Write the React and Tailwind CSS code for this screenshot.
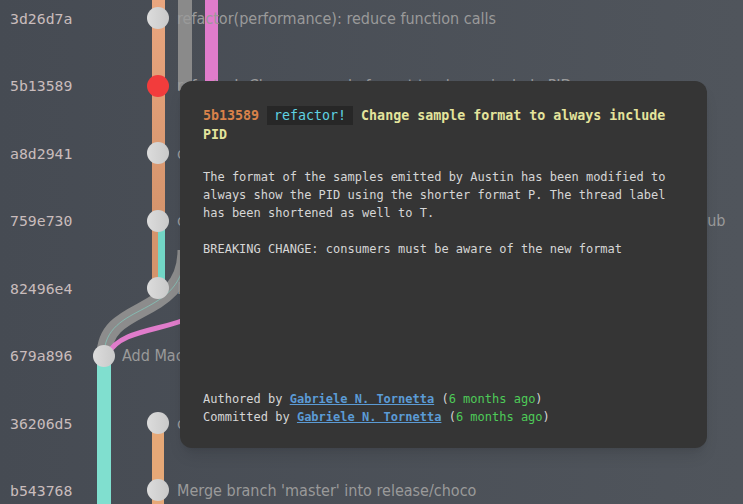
import React from 'react';

// commit rows of the graph log
const commits = [
  { hash: '3d26d7a', msg: 'refactor(performance): reduce function calls', lead: 'w-[177px]' },
  { hash: '5b13589', msg: 'refactor!: Change sample format to always include PID', lead: 'w-[177px]' },
  { hash: 'a8d2941', msg: 'chore: bump version to 3.2.0', lead: 'w-[177px]' },
  { hash: '759e730', msg: 'ci: add a workflow to build, test and publish the releases artifacts on GitHub', lead: 'w-[177px]' },
  { hash: '82496e4', msg: 'Merge branch \'devel\' into master', lead: 'w-[177px]' },
  { hash: '679a896', msg: 'Add MacPorts installation instructions', lead: 'w-[122px]' },
  { hash: '36206d5', msg: 'chore: prepare chocolatey package', lead: 'w-[177px]' },
  { hash: 'b543768', msg: "Merge branch 'master' into release/choco", lead: 'w-[177px]' },
];

const nodes = [
  { x: 158, y: 18 },
  { x: 158, y: 86, red: true },
  { x: 158, y: 153 },
  { x: 158, y: 221 },
  { x: 158, y: 288 },
  { x: 104, y: 356 },
  { x: 158, y: 423 },
  { x: 158, y: 490 },
];

function Graph() {
  return (
    <svg className="absolute left-0 top-0" width="260" height="504" viewBox="0 0 260 504">
      <defs>
        <linearGradient id="orange" x1="0" y1="0" x2="0" y2="1">
          <stop offset="0" stopColor="#e9a67f" />
          <stop offset="1" stopColor="#d5946c" />
        </linearGradient>
        <linearGradient id="node" x1="0" y1="0" x2="1" y2="0">
          <stop offset="0" stopColor="#dcdcdc" />
          <stop offset="1" stopColor="#c9c9c9" />
        </linearGradient>
      </defs>
      {/* side lanes going under the tooltip */}
      <rect x="178" y="0" width="14" height="90" fill="#8a8a8a" />
      <rect x="205" y="0" width="13" height="90" fill="#e07ccb" />
      {/* merge curves into 679a896 */}
      <path d="M185 250 C185 320 104 300 104 356" stroke="#8c8c8c" strokeWidth="15" fill="none" />
      <path d="M185 250 C185 320 104 300 104 356" stroke="#7fdccc" strokeWidth="0.8" fill="none" opacity="0.7" />
      <path d="M215 292 C200 336 125 320 108 354" stroke="#e07ccb" strokeWidth="5" fill="none" />
      {/* main lanes */}
      <rect x="152" y="0" width="13" height="221" fill="url(#orange)" />
      <rect x="152" y="221" width="6" height="67" fill="#d5946c" />
      <rect x="158" y="221" width="7" height="67" fill="#72d6c6" />
      <rect x="97" y="356" width="14" height="148" fill="#80dfcf" />
      <rect x="152" y="423" width="12" height="81" fill="#e6a877" />
      {nodes.map((n) => (
        <circle key={n.y} cx={n.x} cy={n.y} r="11" fill={n.red ? '#f23c3c' : 'url(#node)'} />
      ))}
    </svg>
  );
}

function Tooltip() {
  return (
    <div className="absolute left-[180px] top-[81px] w-[527px] h-[367px] rounded-[12px] bg-[#353535] shadow-lg px-[23px] pt-[25px] font-['DejaVu_Sans_Mono',monospace] text-[12px] leading-[18px] text-[#d6d6d6]">
      <div className="text-[13.3px] leading-[19px] font-bold text-[#e4e49c]">
        <span className="text-[#d9824a]">5b13589</span>
        <span className="ml-[8px] mr-[8px] bg-[#272727] px-[7px] py-[2px] font-normal text-[#5fd3e3]">refactor!</span>
        Change sample format to always include PID
      </div>
      <div className="mt-[24px]">
        The format of the samples emitted by Austin has been modified to always show the PID using the shorter format P. The thread label has been shortened as well to T.
      </div>
      <div className="mt-[18px]">BREAKING CHANGE: consumers must be aware of the new format</div>
      <div className="mt-[132px]">
        Authored by <span className="font-bold text-[#5b9bd5] underline">Gabriele N. Tornetta</span> (<span className="text-[#4ecb58]">6 months ago</span>)
      </div>
      <div>
        Committed by <span className="font-bold text-[#5b9bd5] underline">Gabriele N. Tornetta</span> (<span className="text-[#4ecb58]">6 months ago</span>)
      </div>
    </div>
  );
}

export default function App() {
  return (
    <div className="relative w-[743px] h-[504px] overflow-hidden bg-gradient-to-r from-[#464b53] to-[#50555c]">
      <Graph />
      <div className="relative flex flex-col -mt-[15px]">
        {commits.map((c) => (
          <div key={c.hash} className="flex items-center h-[67.5px] shrink-0 whitespace-nowrap">
            <div className={`${c.lead} shrink-0 pl-[10px] font-['DejaVu_Sans_Mono',monospace] text-[14.8px] text-[#c9bcbc]`}>
              {c.hash}
            </div>
            <div className="shrink-0 font-['DejaVu_Sans',sans-serif] font-stretch-condensed text-[16px] text-[#9a9a9a]">{c.msg}</div>
          </div>
        ))}
      </div>
      <Tooltip />
    </div>
  );
}
